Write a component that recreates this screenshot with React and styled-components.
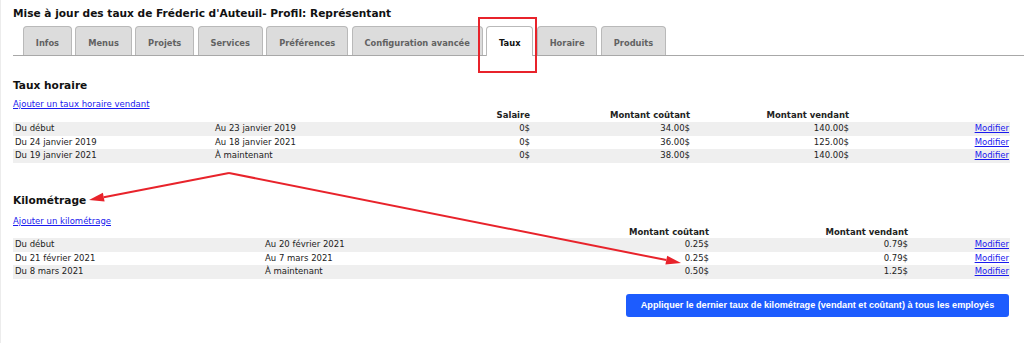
import React from "react";
import styled, { createGlobalStyle } from "styled-components";

const Global = createGlobalStyle`
  html, body { margin: 0; padding: 0; background: #fff; }
  body { font-family: "DejaVu Sans", Verdana, sans-serif; color: #111; }
`;

const Page = styled.div`
  position: relative;
  width: 1024px;
  height: 343px;
  box-sizing: border-box;
  padding: 0 14px 0 12px;
  border-left: 1px solid #ececec;
  overflow: hidden;
`;

const Title = styled.h1`
  margin: 0;
  padding-top: 6px;
  font-size: 10.6px;
  line-height: 14px;
  font-weight: bold;
  color: #111;
`;

const TabBar = styled.div`
  display: flex;
  align-items: flex-end;
  margin-top: 6px;
  padding-left: 10px;
  height: 29px;
  border-bottom: 1px solid #a8a8a8;
  margin-right: -14px;
`;

const Tab = styled.div`
  box-sizing: border-box;
  height: ${(p) => (p.$active ? "30px" : "29px")};
  margin-bottom: ${(p) => (p.$active ? "-1px" : "0")};
  padding: 3px 11.8px 0;
  margin-right: 3.6px;
  display: flex;
  align-items: center;
  border: 1px solid #b9b9b9;
  border-bottom: none;
  border-radius: 4px 4px 0 0;
  background: ${(p) => (p.$active ? "#fff" : "#dcdcdc")};
  color: ${(p) => (p.$active ? "#111" : "#626262")};
  font-size: 8.3px;
  font-weight: bold;
  white-space: nowrap;
`;

const SectionTitle = styled.h2`
  margin: ${(p) => p.$top}px 0 0;
  font-size: 10.6px;
  line-height: 14px;
  font-weight: bold;
  color: #111;
`;

const AddLink = styled.a`
  display: block;
  margin-top: ${(p) => p.$top}px;
  font-size: 8.5px;
  line-height: 10px;
  color: #1a1aee;
  text-decoration: underline;
  width: max-content;
`;

const Row = styled.div`
  display: grid;
  grid-template-columns: ${(p) => p.$cols};
  height: ${(p) => p.$h}px;
  line-height: ${(p) => p.$h}px;
  font-size: 8.5px;
  background: ${(p) => (p.$shade ? "#efefef" : "transparent")};
  font-weight: ${(p) => (p.$head ? "bold" : "normal")};
  color: #222;
`;

const Cell = styled.div`
  padding: 0 2px;
  text-align: ${(p) => (p.$right ? "right" : "left")};
  white-space: nowrap;
  overflow: hidden;
`;

const EditLink = styled.a`
  color: #1a1aee;
  text-decoration: underline;
`;

const ButtonRow = styled.div`
  display: flex;
  justify-content: flex-end;
  margin-top: 15px;
  padding-right: 1px;
`;

const ApplyButton = styled.button`
  box-sizing: border-box;
  width: 383px;
  height: 23px;
  border: none;
  border-radius: 3px;
  background: #1d5cfe;
  color: #fff;
  font-family: "Liberation Sans", Arial, sans-serif;
  font-size: 9.15px;
  font-weight: bold;
  padding: 0;
`;

const Overlay = styled.svg`
  position: absolute;
  left: 0;
  top: 0;
  pointer-events: none;
`;

const tabs = [
  "Infos",
  "Menus",
  "Projets",
  "Services",
  "Préférences",
  "Configuration avancée",
  "Taux",
  "Horaire",
  "Produits",
];

const hourly = [
  ["Du début", "Au 23 janvier 2019", "0$", "34.00$", "140.00$"],
  ["Du 24 janvier 2019", "Au 18 janvier 2021", "0$", "36.00$", "125.00$"],
  ["Du 19 janvier 2021", "À maintenant", "0$", "38.00$", "140.00$"],
];

const km = [
  ["Du début", "Au 20 février 2021", "0.25$", "0.79$"],
  ["Du 21 février 2021", "Au 7 mars 2021", "0.25$", "0.79$"],
  ["Du 8 mars 2021", "À maintenant", "0.50$", "1.25$"],
];

const COLS1 = "200px 199px 120px 160px 159px 160px";
const COLS2 = "250px 248px 200px 199px 101px";

function Arrow({ x1, y1, x2, y2 }) {
  const dx = x2 - x1;
  const dy = y2 - y1;
  const len = Math.hypot(dx, dy);
  const ux = dx / len;
  const uy = dy / len;
  const hl = 15;
  const hw = 4.5;
  const bx = x2 - ux * hl;
  const by = y2 - uy * hl;
  const pts = `${x2},${y2} ${bx - uy * hw},${by + ux * hw} ${bx + uy * hw},${by - ux * hw}`;
  return (
    <g>
      <line x1={x1} y1={y1} x2={bx} y2={by} stroke="#e8232b" strokeWidth="2" />
      <polygon points={pts} fill="#e8232b" />
    </g>
  );
}

export default function App() {
  return (
    <>
      <Global />
      <Page>
        <Title>Mise à jour des taux de Fréderic d'Auteuil- Profil: Représentant</Title>
        <TabBar>
          {tabs.map((t) => (
            <Tab key={t} $active={t === "Taux"}>
              {t}
            </Tab>
          ))}
        </TabBar>

        <SectionTitle $top={22}>Taux horaire</SectionTitle>
        <AddLink href="#" $top={7}>Ajouter un taux horaire vendant</AddLink>
        <Row $cols={COLS1} $h={13} $head>
          <Cell />
          <Cell />
          <Cell $right>Salaire</Cell>
          <Cell $right>Montant coûtant</Cell>
          <Cell $right>Montant vendant</Cell>
          <Cell />
        </Row>
        {hourly.map((r, i) => (
          <Row key={i} $cols={COLS1} $h={13.5} $shade={i % 2 === 0}>
            <Cell>{r[0]}</Cell>
            <Cell>{r[1]}</Cell>
            <Cell $right>{r[2]}</Cell>
            <Cell $right>{r[3]}</Cell>
            <Cell $right>{r[4]}</Cell>
            <Cell $right>
              <EditLink href="#">Modifier</EditLink>
            </Cell>
          </Row>
        ))}

        <SectionTitle $top={30}>Kilométrage</SectionTitle>
        <AddLink href="#" $top={9}>Ajouter un kilométrage</AddLink>
        <Row $cols={COLS2} $h={12.5} $head>
          <Cell />
          <Cell />
          <Cell $right>Montant coûtant</Cell>
          <Cell $right>Montant vendant</Cell>
          <Cell />
        </Row>
        {km.map((r, i) => (
          <Row key={i} $cols={COLS2} $h={13.6} $shade={i % 2 === 0}>
            <Cell>{r[0]}</Cell>
            <Cell>{r[1]}</Cell>
            <Cell $right>{r[2]}</Cell>
            <Cell $right>{r[3]}</Cell>
            <Cell $right>
              <EditLink href="#">Modifier</EditLink>
            </Cell>
          </Row>
        ))}

        <ButtonRow>
          <ApplyButton>
            Appliquer le dernier taux de kilométrage (vendant et coûtant) à tous les employés
          </ApplyButton>
        </ButtonRow>

        <Overlay width="1024" height="343" viewBox="0 0 1024 343">
          <rect x="478" y="18" width="57" height="54" fill="none" stroke="#e8232b" strokeWidth="2" />
          <Arrow x1={228} y1={173} x2={88} y2={200} />
          <Arrow x1={228} y1={173} x2={680} y2={263} />
        </Overlay>
      </Page>
    </>
  );
}
